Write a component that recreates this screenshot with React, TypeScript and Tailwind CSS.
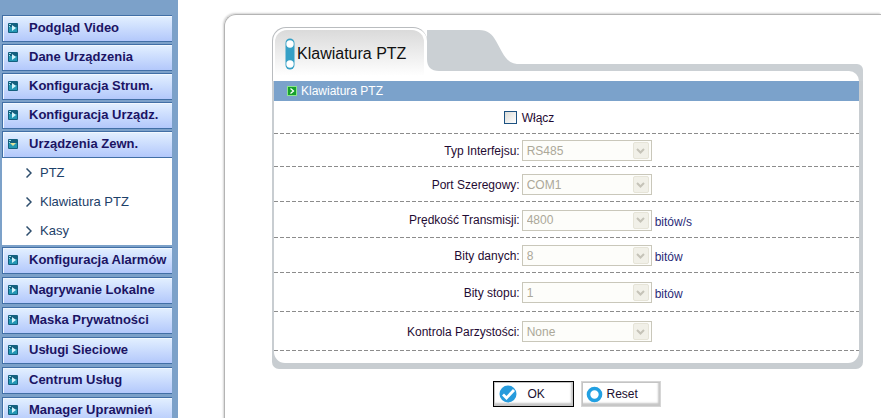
import { ReactNode } from "react";
import clsx from "clsx";

const TOP_ITEMS = ["Podgląd Video", "Dane Urządzenia", "Konfiguracja Strum.", "Konfiguracja Urządz."];
const SUB_ITEMS = ["PTZ", "Klawiatura PTZ", "Kasy"];
const BOTTOM_ITEMS = [
  "Konfiguracja Alarmów",
  "Nagrywanie Lokalne",
  "Maska Prywatności",
  "Usługi Sieciowe",
  "Centrum Usług",
  "Manager Uprawnień",
];

const FIELDS = [
  { id: "interface", label: "Typ Interfejsu:", value: "RS485", unit: "", height: "h-[33px]" },
  { id: "port", label: "Port Szeregowy:", value: "COM1", unit: "", height: "h-[35px]" },
  { id: "baud", label: "Prędkość Transmisji:", value: "4800", unit: "bitów/s", height: "h-[36px]" },
  { id: "data", label: "Bity danych:", value: "8", unit: "bitów", height: "h-[35px]" },
  { id: "stop", label: "Bity stopu:", value: "1", unit: "bitów", height: "h-[39px]" },
  { id: "parity", label: "Kontrola Parzystości:", value: "None", unit: "", height: "h-[39px]" },
];

function MenuIcon({ open = false }: { open?: boolean }) {
  return (
    <svg width="10" height="10" viewBox="0 0 10 10" className="shrink-0">
      <rect width="10" height="10" rx="1" fill="#14607f" />
      <path d="M1 4h8v5H1z" fill="#2497b4" />
      <path d="M1 1h2v1H1zM1 3h1v1H1z" fill="#9fe0ee" />
      {open ? <path d="M2 4h6L5 7z" fill="#e2e29a" /> : <path d="M4 2l4 3-4 3z" fill="#d5f4fb" />}
    </svg>
  );
}

function MenuItem({ label, open }: { label: string; open?: boolean }) {
  return (
    <button
      type="button"
      aria-expanded={!!open}
      className="flex h-[27px] w-full items-center gap-[11px] border-y border-l border-[#416fa6] bg-linear-to-b from-[#e3f0ff] to-[#b3c8fb] pb-[2px] pl-[5px] text-left text-[13px] leading-4 font-bold whitespace-nowrap text-[#1b1464] shadow-[inset_1px_1px_0_#f2f8ff]"
    >
      <MenuIcon open={open} />
      {label}
    </button>
  );
}

function Row({ height, label, children }: { height: string; label: ReactNode; children: ReactNode }) {
  return (
    <div
      className={clsx(
        "grid grid-cols-[42%_1fr] items-center gap-[2px] bg-[repeating-linear-gradient(90deg,#8c8c8c_0_4px,transparent_4px_6px)] bg-[length:100%_1px] bg-bottom bg-no-repeat",
        height
      )}
    >
      <div className="flex justify-end">{label}</div>
      <div className="flex items-center gap-[3px]">{children}</div>
    </div>
  );
}

export default function App() {
  return (
    <div className="flex min-h-screen bg-white font-['Liberation_Sans',Arial,sans-serif] text-[12px] leading-4 text-[#1f0b33]">
      {/* Sidebar */}
      <nav className="w-[178px] shrink-0 bg-[#7ca1c9] pt-[15px] pr-[6px] pl-[2px]">
        <div className="flex flex-col gap-[2px]">
          {TOP_ITEMS.map((item) => (
            <MenuItem key={item} label={item} />
          ))}
          <MenuItem label="Urządzenia Zewn." open />
        </div>
        <ul className="mb-[2px] bg-white">
          {SUB_ITEMS.map((item) => (
            <li key={item}>
              <a href="#" className="flex h-[29px] items-center gap-2 pl-6 text-[13px] text-[#1d4169]">
                <svg width="6" height="10" viewBox="0 0 6 10" fill="none" stroke="#2d4d6c" strokeWidth="1.5">
                  <path d="M0.5 0.5L5 5 0.5 9.5" />
                </svg>
                {item}
              </a>
            </li>
          ))}
        </ul>
        <div className="flex flex-col gap-[3px]">
          {BOTTOM_ITEMS.map((item) => (
            <MenuItem key={item} label={item} />
          ))}
        </div>
      </nav>

      {/* Content */}
      <main className="mt-[14px] ml-[46px] min-w-0 flex-1 rounded-tl-[12px] border-t border-l border-[#b4b4b4] pt-3 pr-[18px] pl-[47px] shadow-[-1px_-1px_2px_#d4d4d4]">
        <form>
          {/* Tab header */}
          <div className="flex h-[54px]">
            <div className="w-[155px] shrink-0 rounded-t-[14px] border-t border-l border-[#b9bcbf] bg-white pt-[2px] pr-[3px] pl-[2px]">
              <h1 className="flex h-full items-center gap-[2px] rounded-t-[12px] bg-linear-to-b from-[#dadada] to-white to-90% pb-1 pl-[10px] text-[16px] leading-5 text-[#111]">
                <svg width="10" height="32" viewBox="0 0 10 32" className="shrink-0">
                  <rect x="0.5" y="0.5" width="9" height="31" rx="4.5" fill="#35a0c6" />
                  <circle cx="5" cy="6" r="3.7" fill="#fff" />
                  <circle cx="5" cy="26" r="3.7" fill="#fff" />
                </svg>
                Klawiatura PTZ
              </h1>
            </div>
            <svg width="110" height="54" viewBox="0 0 110 54" className="shrink-0">
              <path
                d="M-4 3H52C61 3 65 7 69 14L75 25C80 34 84 37 94 37H110V44H12C4 44 0 40 0 32V14C0 9-1 5-4 3Z"
                fill="#cbd0d4"
              />
            </svg>
            <div className="mt-[37px] flex-1 rounded-tr-[6px] bg-[#cbd0d4] pt-[7px] pr-1">
              <div className="h-full rounded-tr-[10px] bg-white" />
            </div>
          </div>

          {/* Panel body */}
          <div className="rounded-b-[7px] bg-[#c8cdd1] pr-1 pb-[6px] pl-[2px]">
            <div className="rounded-b-[11px] bg-white pb-3">
              <h2 className="flex h-5 items-center gap-1 bg-[#7ba2cb] pl-[13px] text-white">
                <svg width="10" height="10" viewBox="0 0 10 10">
                  <rect width="10" height="10" fill="#8be68b" />
                  <rect x="1" y="1" width="8" height="8" fill="#16a02c" />
                  <path d="M3.5 2.5L6.5 5 3.5 7.5" fill="none" stroke="#fff" strokeWidth="1.3" />
                </svg>
                Klawiatura PTZ
              </h2>

              <Row
                height="h-[33px]"
                label={
                  <input
                    id="enable"
                    type="checkbox"
                    className="mr-[3px] size-[13px] appearance-none border border-[#1d5281] bg-linear-to-br from-[#dcdcd7] to-white"
                  />
                }
              >
                <label htmlFor="enable">Włącz</label>
              </Row>

              {FIELDS.map((field) => (
                <Row key={field.id} height={field.height} label={<label htmlFor={field.id}>{field.label}</label>}>
                  <div className="grid w-[130px] grid-cols-[1fr_18px] items-center border border-[#c9c7ba] bg-[#fdfdfa]">
                    <select
                      id={field.id}
                      disabled
                      className="col-span-2 col-start-1 row-start-1 h-[19px] appearance-none bg-transparent pl-1 text-[12px] leading-4 text-[#aca899]"
                    >
                      <option>{field.value}</option>
                    </select>
                    <span className="pointer-events-none col-start-2 row-start-1 flex h-[17px] w-4 items-center justify-center rounded-xs border border-[#e6e4d8] bg-[#f1f0e8]">
                      <svg width="9" height="6" viewBox="0 0 9 6" fill="none" stroke="#c5c3b8" strokeWidth="2">
                        <path d="M1 1l3.5 3.5L8 1" />
                      </svg>
                    </span>
                  </div>
                  {field.unit && <span className="pt-[3px] text-[#2b2b78]">{field.unit}</span>}
                </Row>
              ))}
            </div>
          </div>

          {/* Actions */}
          <div className="mt-3 flex justify-center gap-[7px] pl-[18px]">
            <button
              type="submit"
              className="flex h-[26px] w-[81px] items-center gap-[11px] border border-black bg-white pl-[5px] text-[#1c1030] shadow-[inset_1px_1px_0_#c4c4c4,inset_-2px_-3px_2px_#c6c6c6]"
            >
              <svg width="18" height="18" viewBox="0 0 18 18">
                <circle cx="9" cy="9" r="8.5" fill="#279bdc" />
                <path d="M4 9.5l3.5 3.5L15 5" fill="none" stroke="#fff" strokeWidth="2.8" />
              </svg>
              OK
            </button>
            <button
              type="reset"
              className="flex h-[26px] w-[80px] items-center gap-1 border border-[#d6d6d6] bg-white pl-1 text-[#1c1030] shadow-[inset_1px_1px_0_#c4c4c4,inset_-2px_-3px_2px_#c6c6c6]"
            >
              <svg width="17" height="17" viewBox="0 0 17 17">
                <circle cx="8.5" cy="8.5" r="6" fill="#fff" stroke="#22a0e2" strokeWidth="3.6" />
              </svg>
              Reset
            </button>
          </div>
        </form>
      </main>
    </div>
  );
}
